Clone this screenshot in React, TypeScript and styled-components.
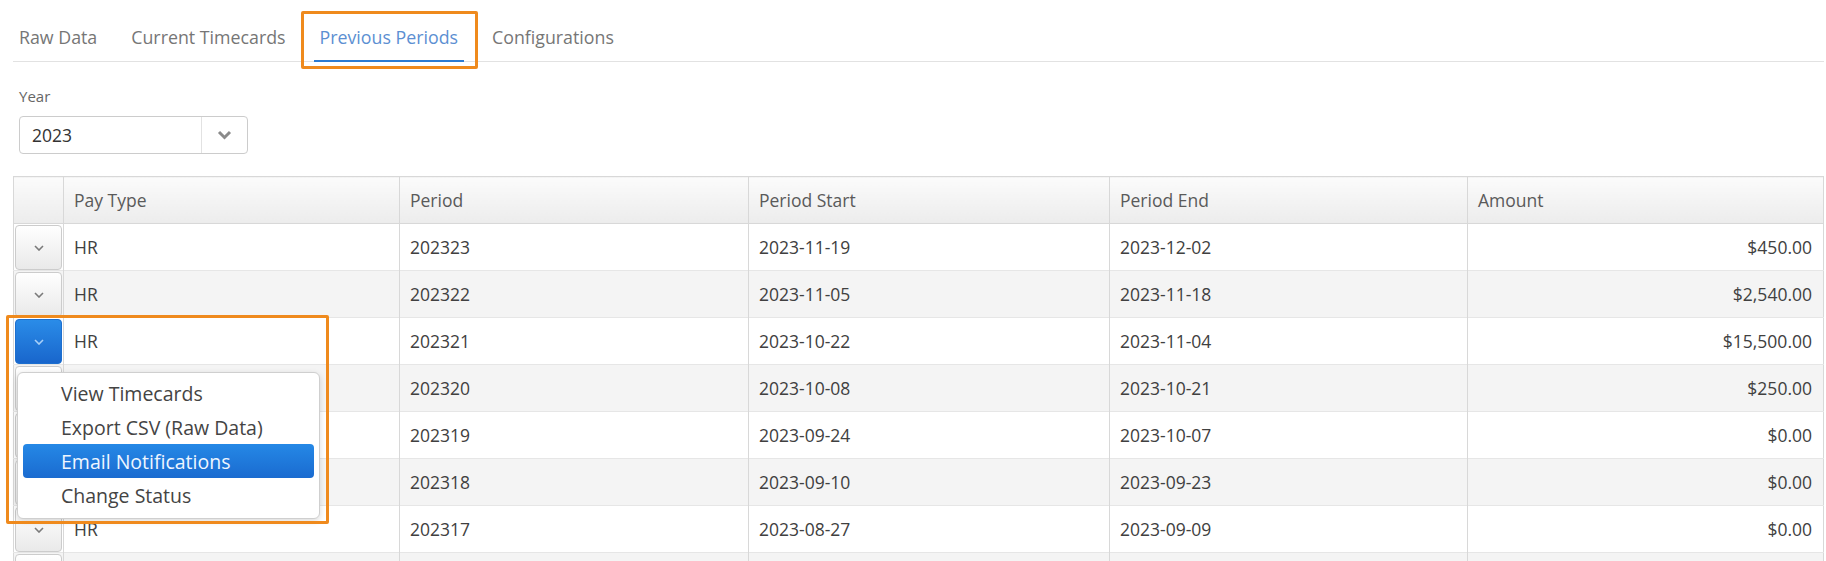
import React from 'react';
import styled, { createGlobalStyle } from 'styled-components';

interface PeriodRow {
  payType: string;
  period: string;
  start: string;
  end: string;
  amount: string;
}

const GlobalStyle = createGlobalStyle`
  html, body {
    margin: 0;
    padding: 0;
    background: #ffffff;
  }
  body {
    font-family: 'Open Sans', 'DejaVu Sans', sans-serif;
    color: #333333;
  }
  * {
    box-sizing: border-box;
  }
`;

const Page = styled.div`
  position: relative;
  padding: 0 2px 0 13px;
`;

const TabBar = styled.ul`
  display: flex;
  gap: 22px;
  margin: 0;
  padding: 0;
  list-style: none;
  border-bottom: 1px solid #e2e2e2;
`;

const Tab = styled.li<{ $active?: boolean }>`
  position: relative;
  margin-bottom: -1px;
  padding: 25px 6px 11px;
  font-size: 17.8px;
  line-height: 24px;
  color: ${(p) => (p.$active ? '#5c8fd2' : '#767676')};
  border-bottom: 2px solid ${(p) => (p.$active ? '#2c7bd2' : 'transparent')};
  white-space: nowrap;
  cursor: pointer;
`;

const Callout = styled.div<{ $top: number; $left: number; $right?: number; $bottom?: number; $width?: number; $height?: number }>`
  position: absolute;
  top: ${(p) => p.$top}px;
  left: ${(p) => p.$left}px;
  ${(p) => (p.$right !== undefined ? `right: ${p.$right}px;` : '')}
  ${(p) => (p.$bottom !== undefined ? `bottom: ${p.$bottom}px;` : '')}
  ${(p) => (p.$width !== undefined ? `width: ${p.$width}px;` : '')}
  ${(p) => (p.$height !== undefined ? `height: ${p.$height}px;` : '')}
  border: 3px solid #ef8a1d;
  border-radius: 2px;
  pointer-events: none;
  z-index: 5;
`;

const Field = styled.div`
  padding-top: 24px;
`;

const FieldLabel = styled.label`
  display: block;
  font-size: 15px;
  line-height: 20px;
  color: #666666;
  margin-left: 6px;
`;

const Select = styled.div`
  display: flex;
  align-items: stretch;
  width: 229px;
  height: 38px;
  margin: 10px 0 0 6px;
  border: 1px solid #cccccc;
  border-radius: 4px;
  background: #ffffff;
`;

const SelectValue = styled.div`
  flex: 1;
  display: flex;
  align-items: center;
  padding-left: 12px;
  font-size: 17.5px;
  color: #333333;
`;

const SelectToggle = styled.div`
  width: 46px;
  display: flex;
  align-items: center;
  justify-content: center;
  border-left: 1px solid #e2e2e2;
`;

const Table = styled.table`
  width: 100%;
  margin-top: 22px;
  border-collapse: collapse;
  table-layout: fixed;
  border: 1px solid #d8d8d8;
  font-size: 17.5px;
`;

const HeadCell = styled.th<{ $width?: number }>`
  ${(p) => (p.$width ? `width: ${p.$width}px;` : '')}
  height: 47px;
  padding: 0 10px;
  text-align: left;
  font-weight: 400;
  color: #5a5a5a;
  background: linear-gradient(#fbfbfb, #ececec);
  border: 1px solid #d8d8d8;
`;

const BodyRow = styled.tr<{ $striped: boolean }>`
  background: ${(p) => (p.$striped ? '#f4f4f4' : '#ffffff')};
`;

const Cell = styled.td<{ $align?: 'left' | 'right' }>`
  height: 46px;
  padding: 0 11px 0 10px;
  text-align: ${(p) => p.$align ?? 'left'};
  color: #404040;
  border-top: 1px solid #e6e6e6;
  border-left: 1px solid #d8d8d8;
  white-space: nowrap;
`;

const ToggleCell = styled.td`
  position: relative;
  padding: 0;
  border-top: 1px solid #e6e6e6;
`;

const RowToggle = styled.button<{ $open?: boolean }>`
  display: flex;
  align-items: center;
  justify-content: center;
  width: 47px;
  height: 45px;
  margin: 1px 0 0 1px;
  padding: 0;
  border: 1px solid ${(p) => (p.$open ? '#1d6fcf' : '#cccccc')};
  border-radius: 4px;
  background: ${(p) =>
    p.$open ? 'linear-gradient(#2a8ce8, #1966cc)' : 'linear-gradient(#ffffff, #e9e9e9)'};
  color: ${(p) => (p.$open ? '#a9d0f8' : '#7a7a7a')};
  cursor: pointer;
`;

const Menu = styled.ul`
  position: absolute;
  top: 54px;
  left: 3px;
  width: 303px;
  margin: 0;
  padding: 3px 5px 6px;
  list-style: none;
  background: #ffffff;
  border: 1px solid #cfcfcf;
  border-radius: 6px;
  box-shadow: 0 2px 6px rgba(0, 0, 0, 0.15);
  z-index: 4;
`;

const MenuItem = styled.li<{ $selected?: boolean }>`
  height: 34px;
  display: flex;
  align-items: center;
  padding-left: 38px;
  font-size: 19.5px;
  border-radius: 4px;
  color: ${(p) => (p.$selected ? '#eef6ff' : '#444444')};
  background: ${(p) => (p.$selected ? 'linear-gradient(#2588e6, #1a6bd0)' : 'transparent')};
  white-space: nowrap;
`;

const SelectChevron = () => (
  <svg width="15" height="10" viewBox="0 0 15 10">
    <polyline points="2,2 7.5,7.5 13,2" fill="none" stroke="#8a8a8a" strokeWidth="3" />
  </svg>
);

const RowChevron = () => (
  <svg width="10" height="6" viewBox="0 0 10 6">
    <polyline points="1,1 5,5 9,1" fill="none" stroke="currentColor" strokeWidth="1.6" />
  </svg>
);

const tabs = ['Raw Data', 'Current Timecards', 'Previous Periods', 'Configurations'];

const periods: PeriodRow[] = [
  { payType: 'HR', period: '202323', start: '2023-11-19', end: '2023-12-02', amount: '$450.00' },
  { payType: 'HR', period: '202322', start: '2023-11-05', end: '2023-11-18', amount: '$2,540.00' },
  { payType: 'HR', period: '202321', start: '2023-10-22', end: '2023-11-04', amount: '$15,500.00' },
  { payType: 'HR', period: '202320', start: '2023-10-08', end: '2023-10-21', amount: '$250.00' },
  { payType: 'HR', period: '202319', start: '2023-09-24', end: '2023-10-07', amount: '$0.00' },
  { payType: 'HR', period: '202318', start: '2023-09-10', end: '2023-09-23', amount: '$0.00' },
  { payType: 'HR', period: '202317', start: '2023-08-27', end: '2023-09-09', amount: '$0.00' },
  { payType: 'HR', period: '202316', start: '2023-08-13', end: '2023-08-26', amount: '$0.00' },
];

const menuItems = ['View Timecards', 'Export CSV (Raw Data)', 'Email Notifications', 'Change Status'];

const OPEN_ROW = 2;

export default function App() {
  return (
    <Page>
      <GlobalStyle />
      <TabBar>
        {tabs.map((tab) => (
          <Tab key={tab} $active={tab === 'Previous Periods'}>
            {tab}
            {tab === 'Previous Periods' && <Callout $top={11} $left={-13} $right={-14} $bottom={-9} />}
          </Tab>
        ))}
      </TabBar>

      <Field>
        <FieldLabel>Year</FieldLabel>
        <Select>
          <SelectValue>2023</SelectValue>
          <SelectToggle>
            <SelectChevron />
          </SelectToggle>
        </Select>
      </Field>

      <Table>
        <thead>
          <tr>
            <HeadCell $width={50} />
            <HeadCell $width={336}>Pay Type</HeadCell>
            <HeadCell $width={349}>Period</HeadCell>
            <HeadCell $width={361}>Period Start</HeadCell>
            <HeadCell $width={358}>Period End</HeadCell>
            <HeadCell>Amount</HeadCell>
          </tr>
        </thead>
        <tbody>
          {periods.map((row, index) => (
            <BodyRow key={row.period} $striped={index % 2 === 1}>
              <ToggleCell>
                <RowToggle $open={index === OPEN_ROW}>
                  <RowChevron />
                </RowToggle>
                {index === OPEN_ROW && (
                  <>
                    <Menu>
                      {menuItems.map((item) => (
                        <MenuItem key={item} $selected={item === 'Email Notifications'}>
                          {item}
                        </MenuItem>
                      ))}
                    </Menu>
                    <Callout $top={-3} $left={-8} $width={323} $height={209} />
                  </>
                )}
              </ToggleCell>
              <Cell>{row.payType}</Cell>
              <Cell>{row.period}</Cell>
              <Cell>{row.start}</Cell>
              <Cell>{row.end}</Cell>
              <Cell $align="right">{row.amount}</Cell>
            </BodyRow>
          ))}
        </tbody>
      </Table>
    </Page>
  );
}
